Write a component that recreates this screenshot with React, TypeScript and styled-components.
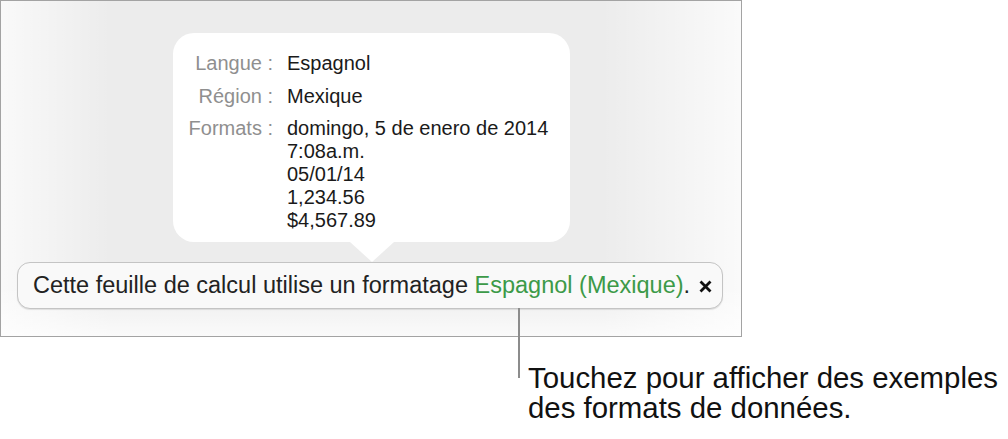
import React from "react";
import styled, { createGlobalStyle } from "styled-components";

const GlobalStyle = createGlobalStyle`
  html, body {
    margin: 0;
    padding: 0;
    background: #ffffff;
  }
  body {
    font-family: "Liberation Sans", Arial, sans-serif;
    color: #1c1c1c;
  }
`;

const Page = styled.div`
  display: flex;
  flex-direction: column;
  align-items: flex-start;
  width: 1008px;
  height: 439px;
  overflow: hidden;
`;

const Frame = styled.div`
  box-sizing: border-box;
  width: 742px;
  height: 337px;
  border: 1px solid #a3a3a3;
  padding: 32px 17px 26px 16px;
  display: flex;
  flex-direction: column;
  background-color: #ececec;
  background-image:
    linear-gradient(to top, rgba(255, 255, 255, 0.75) 0px, rgba(255, 255, 255, 0) 50px),
    linear-gradient(
      to right,
      rgba(255, 255, 255, 0.7) 0px,
      rgba(255, 255, 255, 0) 110px,
      rgba(255, 255, 255, 0) 600px,
      rgba(255, 255, 255, 0.75) 740px
    );
`;

const Popover = styled.div`
  position: relative;
  box-sizing: border-box;
  margin-left: 156px;
  width: 397px;
  height: 209px;
  padding: 19px 16px 0 16px;
  background: #ffffff;
  border-radius: 21px;
  display: grid;
  grid-template-columns: 84px auto;
  column-gap: 14px;
  row-gap: 9.5px;
  align-content: start;
  font-size: 20px;
  line-height: 23px;

  &::after {
    content: "";
    position: absolute;
    left: 177px;
    top: 100%;
    width: 44px;
    height: 20px;
    background: #ffffff;
    clip-path: polygon(0 0, 100% 0, 50% 100%);
  }
`;

const Label = styled.div`
  justify-self: end;
  white-space: nowrap;
  color: #8f8f8f;
`;

const Value = styled.div`
  color: #1a1a1a;
  white-space: nowrap;
`;

const FormatLine = styled.div``;

const Banner = styled.div`
  box-sizing: border-box;
  margin-top: 20px;
  width: 706px;
  height: 47px;
  border: 1px solid #c4c4c4;
  border-radius: 13px;
  background: #f9f9f9;
  box-shadow: 0 1px 1px rgba(0, 0, 0, 0.1);
  display: flex;
  align-items: center;
  padding: 0 14px 0 15px;
  gap: 9px;
  font-size: 23.5px;
  color: #222222;
  white-space: nowrap;
`;

const Green = styled.span`
  color: #3c9a48;
`;

const CloseButton = styled.span`
  display: inline-flex;
  width: 13px;
  height: 13px;
  margin-left: auto;
  margin-top: 1px;
`;

const Callout = styled.div`
  position: relative;
  display: flex;
  align-items: flex-start;
  margin-top: -29px;
  margin-left: 518px;
  gap: 8px;
`;

const Leader = styled.div`
  width: 2px;
  height: 70px;
  background: #8c8c8c;
  flex: none;
`;

const CalloutText = styled.div`
  padding-top: 55px;
  font-size: 29.4px;
  line-height: 30px;
  color: #111111;
  white-space: nowrap;
`;

export default function App() {
  return (
    <>
      <GlobalStyle />
      <Page>
        <Frame>
          <Popover>
            <Label>Langue :</Label>
            <Value>Espagnol</Value>
            <Label>Région :</Label>
            <Value>Mexique</Value>
            <Label>Formats :</Label>
            <Value>
              <FormatLine>domingo, 5 de enero de 2014</FormatLine>
              <FormatLine>7:08a.m.</FormatLine>
              <FormatLine>05/01/14</FormatLine>
              <FormatLine>1,234.56</FormatLine>
              <FormatLine>$4,567.89</FormatLine>
            </Value>
          </Popover>
          <Banner>
            <span>
              Cette feuille de calcul utilise un formatage{" "}
              <Green>Espagnol (Mexique)</Green>.
            </span>
            <CloseButton>
              <svg width="13" height="13" viewBox="0 0 13 13">
                <path
                  d="M1.5 1.5 L11.5 11.5 M11.5 1.5 L1.5 11.5"
                  stroke="#111"
                  strokeWidth="2.8"
                  strokeLinecap="butt"
                />
              </svg>
            </CloseButton>
          </Banner>
        </Frame>
        <Callout>
          <Leader />
          <CalloutText>
            Touchez pour afficher des exemples
            <br />
            des formats de données.
          </CalloutText>
        </Callout>
      </Page>
    </>
  );
}
